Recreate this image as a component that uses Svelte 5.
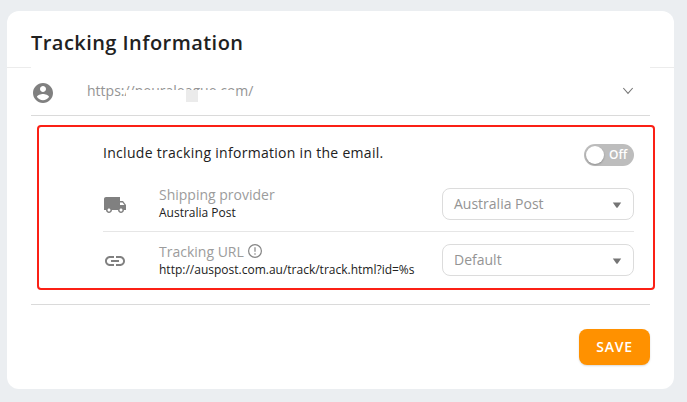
<script lang="ts">
  let enabled = $state(false)

  const account = 'https://neuraleague.com/'
  const provider = 'Australia Post'
  const trackingUrl = 'http://auspost.com.au/track/track.html?id=%s'
</script>

{#snippet select(value: string)}
  <button class="select" type="button" aria-haspopup="listbox">
    <span>{value}</span>
    <svg width="10" height="6" viewBox="0 0 10 6" aria-hidden="true">
      <path d="M.8.5h8.4L5.5 5.8h-1z" fill="#757575" />
    </svg>
  </button>
{/snippet}

<main class="page">
  <section class="card">
    <h2 class="card-title">Tracking Information</h2>

    <div class="account">
      <svg class="account-icon" width="24" height="24" viewBox="0 0 24 24" aria-hidden="true">
        <path
          fill="#808080"
          d="M12 2C6.48 2 2 6.48 2 12s4.48 10 10 10 10-4.48 10-10S17.52 2 12 2zm0 3c1.66 0 3 1.34 3 3s-1.34 3-3 3-3-1.34-3-3 1.34-3 3-3zm0 14.2c-2.5 0-4.71-1.28-6-3.22.03-1.99 4-3.08 6-3.08 1.99 0 5.97 1.09 6 3.08-1.29 1.94-3.5 3.22-6 3.22z"
        />
      </svg>
      <span class="account-url">
        {account}
        <span class="mask"></span>
        <span class="mask-chip"></span>
      </span>
      <svg class="chevron" width="12" height="8" viewBox="0 0 12 8" fill="none" aria-hidden="true">
        <path d="M1.3 1L6 6.4 10.7 1" stroke="#777" stroke-width="1.1" />
      </svg>
    </div>

    <div class="tracking">
      <div class="toggle-row">
        <span class="toggle-text">Include tracking information in the email.</span>
        <button
          class="toggle"
          class:on={enabled}
          type="button"
          role="switch"
          aria-checked={enabled}
          aria-label="Include tracking information"
          onclick={() => (enabled = !enabled)}
        >
          <span class="knob"></span>
          <span class="toggle-label">{enabled ? 'On' : 'Off'}</span>
        </button>
      </div>

      <div class="row">
        <svg class="row-icon" width="24" height="24" viewBox="0 0 24 24" aria-hidden="true">
          <path
            fill="#808080"
            d="M20 8h-3V4H3c-1.1 0-2 .9-2 2v11h2c0 1.66 1.34 3 3 3s3-1.34 3-3h6c0 1.66 1.34 3 3 3s3-1.34 3-3h2v-5l-3-4zM6 18.5c-.83 0-1.5-.67-1.5-1.5s.67-1.5 1.5-1.5 1.5.67 1.5 1.5-.67 1.5-1.5 1.5zm13.5-9l1.96 2.5H17V9.5h2.5zm-1.5 9c-.83 0-1.5-.67-1.5-1.5s.67-1.5 1.5-1.5 1.5.67 1.5 1.5-.67 1.5-1.5 1.5z"
          />
        </svg>
        <div class="row-text">
          <div class="label">Shipping provider</div>
          <div class="value">{provider}</div>
        </div>
        {@render select(provider)}
      </div>

      <div class="row">
        <svg class="row-icon" width="24" height="24" viewBox="0 0 24 24" aria-hidden="true">
          <path
            fill="#808080"
            d="M3.9 12c0-1.71 1.39-3.1 3.1-3.1h4V7H7c-2.76 0-5 2.24-5 5s2.24 5 5 5h4v-1.9H7c-1.71 0-3.1-1.39-3.1-3.1zM8 13h8v-2H8v2zm9-6h-4v1.9h4c1.71 0 3.1 1.39 3.1 3.1s-1.39 3.1-3.1 3.1h-4V17h4c2.76 0 5-2.24 5-5s-2.24-5-5-5z"
          />
        </svg>
        <div class="row-text">
          <div class="label">
            Tracking URL
            <svg class="info" width="16" height="16" viewBox="0 0 16 16" fill="none" aria-hidden="true">
              <circle cx="8" cy="8" r="6.4" stroke="#858585" stroke-width="1.2" />
              <path d="M8 4.2v4.6M8 10.2v1.5" stroke="#858585" stroke-width="1.2" />
            </svg>
          </div>
          <div class="value">{trackingUrl}</div>
        </div>
        {@render select('Default')}
      </div>
    </div>

    <footer class="card-footer">
      <button class="save" type="button">SAVE</button>
    </footer>
  </section>
</main>

<style>
  :global(body) {
    background: #ebeef1;
  }

  .page {
    box-sizing: border-box;
    height: 402px;
    padding: 11px 13px 13px 7px;
    font-family: 'Open Sans', 'Noto Sans', sans-serif;
    font-size: 14px;
    color: #212121;
  }

  button {
    font-family: inherit;
    border: none;
    cursor: pointer;
  }

  .card {
    box-sizing: border-box;
    height: 378px;
    background: #fff;
    border-radius: 12px;
  }

  .card-title {
    box-sizing: border-box;
    height: 57px;
    margin: 0;
    padding: 0 24px;
    border-bottom: 1px solid #ececec;
    font-size: 20px;
    font-weight: 600;
    letter-spacing: 0.45px;
    line-height: 64px;
  }

  /* overlaps the header divider so that only its ends stay visible */
  .account {
    position: relative;
    box-sizing: border-box;
    display: flex;
    align-items: center;
    height: 49px;
    margin: -1px 24px 0;
    padding-right: 16px;
    background: #fff;
    border-bottom: 1px solid #dadada;
  }

  .account-icon {
    margin-top: 3px;
  }

  .account-url {
    position: relative;
    flex: 1;
    margin-left: 32px;
    color: #949494;
    line-height: 20px;
  }

  .mask {
    position: absolute;
    left: 39px;
    top: 9px;
    width: 109px;
    height: 12px;
    background: #fff;
  }

  .mask-chip {
    position: absolute;
    left: 99px;
    top: 9px;
    width: 12px;
    height: 12px;
    background: #ebebeb;
  }

  .tracking {
    box-sizing: border-box;
    height: 165px;
    margin: 9px 19px 0 30px;
    padding: 0 19px 0 64px;
    border: 2px solid #fb2015;
    border-radius: 4px;
  }

  .toggle-row {
    display: flex;
    align-items: center;
    justify-content: space-between;
    height: 49px;
    padding-top: 1px;
  }

  .toggle-text {
    letter-spacing: 0.29px;
  }

  .toggle {
    display: flex;
    align-items: center;
    gap: 5px;
    width: 50px;
    height: 22px;
    margin-top: 5px;
    padding: 0 2px;
    border-radius: 11px;
    background: #bdbdbd;
    color: #fff;
  }
  .toggle.on {
    flex-direction: row-reverse;
    background: #ff9100;
  }

  .knob {
    width: 18px;
    height: 18px;
    border-radius: 50%;
    background: #fff;
    box-shadow: 0 1px 2px rgba(0, 0, 0, 0.25);
  }

  .toggle-label {
    font-size: 12px;
    font-weight: 600;
    line-height: 16px;
  }

  .row {
    box-sizing: border-box;
    display: flex;
    align-items: center;
    height: 54px;
  }
  .row + .row {
    height: 57px;
    border-top: 1px solid #e6e6e6;
  }

  .row-icon {
    margin-top: 2px;
  }

  .row-text {
    flex: 1;
    margin: -2px 0 0 32px;
  }
  .row + .row .row-text {
    margin-top: 0;
  }

  .label {
    display: flex;
    align-items: center;
    gap: 3px;
    height: 19px;
    color: #9c9c9c;
    line-height: 19px;
  }

  .info {
    margin-top: -1px;
  }

  .value {
    font-size: 12px;
    line-height: 17px;
  }

  .select {
    box-sizing: border-box;
    display: flex;
    align-items: center;
    justify-content: space-between;
    width: 192px;
    height: 32px;
    padding: 0 11px;
    border: 1px solid #dcdcdc;
    border-radius: 8px;
    background: #fff;
    color: #949494;
    font-size: 14px;
  }
  .select span {
    margin-top: -2px;
  }
  .select svg {
    margin-top: 2px;
  }

  .card-footer {
    display: flex;
    justify-content: flex-end;
    margin: 14px 24px 0;
    padding-top: 24px;
    border-top: 1px solid #dadada;
  }

  .save {
    width: 71px;
    height: 36px;
    padding: 0 0 2px;
    border-radius: 8px;
    background: #ff9100;
    box-shadow: 0 1px 2px rgba(0, 0, 0, 0.15);
    color: #fff;
    font-size: 14px;
    font-weight: 600;
    letter-spacing: 0.8px;
  }
</style>
